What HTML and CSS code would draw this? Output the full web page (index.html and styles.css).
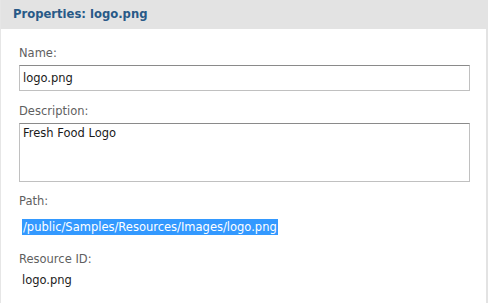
FILE: index.html
```html
<!DOCTYPE html>
<html>
    <head>
        <meta charset="utf-8">
        <title>properties</title>
        <link rel="stylesheet" href="styles.css">
    </head>
    <body>
        <div class="panel">
            <!-- 标题 -->
            <div class="panel-header">Properties: logo.png</div>
            <div class="panel-body">
                <div class="field field-name">
                    <div class="field-label">Name:</div>
                    <div class="input-style">logo.png</div>
                </div>
                <div class="field field-desc">
                    <div class="field-label">Description:</div>
                    <div class="input-style textarea-style">Fresh Food Logo</div>
                </div>
                <div class="field field-path">
                    <div class="field-label">Path:</div>
                    <div class="field-value path-value"><span class="selected">/public/Samples/Resources/Images/logo.png</span></div>
                </div>
                <div class="field">
                    <div class="field-label">Resource ID:</div>
                    <div class="field-value field-id">logo.png</div>
                </div>
            </div>
        </div>
    </body>
</html>
```

FILE: styles.css
```css
body {
    margin: 0;
    font-family: "DejaVu Sans", Verdana, sans-serif;
    font-size: 11.5px;
    background: #ffffff;
}
.panel {
    width: 488px;
    height: 303px;
    box-sizing: border-box;
    border-left: 1px solid #e6e6e6;
    border-right: 2px solid #e3e3e3;
    overflow: hidden;
}
.panel-header {
    height: 29px;
    line-height: 29px;
    margin-left: -1px;
    margin-right: -2px;
    padding-left: 13px;
    background-color: #e3e3e3;
    color: #285987;
    font-weight: bold;
    font-size: 11.6px;
}
.panel-body {
    padding: 17px 16px 0 18px;
}
.field {
    margin-bottom: 14px;
}
.field-name {
    margin-bottom: 13px;
}
.field-desc {
    margin-bottom: 12px;
}
.field-label {
    color: #5f5f5f;
    line-height: 14px;
    margin-bottom: 5px;
}
.input-style {
    height: 24px;
    line-height: 24px;
    padding: 0 3px;
    border: 1px solid #c0c0c0;
    border-top-color: #8a8a8a;
    color: #1a1a1a;
}
.textarea-style {
    height: 57px;
    line-height: 18px;
}
.field-value {
    color: #222222;
    line-height: 16px;
    padding: 3px 0 0 3px;
}
.path-value {
    padding-top: 6px;
}
.field-path {
    margin-bottom: 17px;
}
.field-id {
    padding-top: 1px;
}
.selected {
    display: inline-block;
    height: 16px;
    line-height: 16px;
    background-color: #3399ff;
    color: #ffffff;
    padding: 0 1px;
}
```
